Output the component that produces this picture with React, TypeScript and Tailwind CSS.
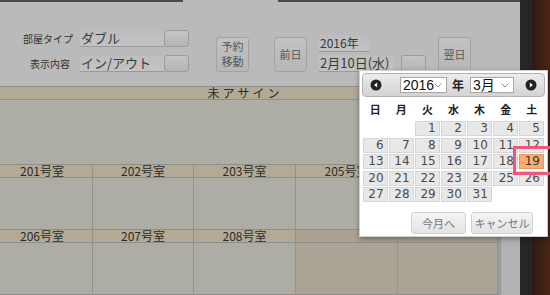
import React from 'react'

const jp = { fontFamily: '"Noto Sans CJK JP", "Noto Sans", sans-serif' }

const weekdays = ['日', '月', '火', '水', '木', '金', '土']

// March 2016 starts on Tuesday
const days: (number | null)[] = [null, null, ...Array.from({ length: 31 }, (_, i) => i + 1)]

function SmallBtn() {
  return <div className="w-[25px] h-[17px] rounded-[3px] border border-[#9c9c9c] bg-gradient-to-b from-[#c4c4c4] to-[#b4b4b4]" />
}

function BigBtn({ children }: { children: React.ReactNode }) {
  return (
    <div className="w-[33px] h-[35px] rounded-[3px] border border-[#a2a2a2] bg-gradient-to-b from-[#c2c2c2] to-[#b6b6b6] flex flex-col items-center justify-center text-[11px] text-[#555]">
      {children}
    </div>
  )
}

function Field({ text, w, size = 'text-[13px]' }: { text: string; w: string; size?: string }) {
  return (
    <div className={`${w} h-[17px] border-b border-[#9a9a9a] bg-gradient-to-b from-[#bdbdbd] to-[#c3c3c3] ${size} leading-[16px] text-[#3a3a3a] px-[1px] whitespace-nowrap`}>
      {text}
    </div>
  )
}

function CircleArrow({ dir }: { dir: 'l' | 'r' }) {
  return (
    <svg width="12" height="12" viewBox="0 0 12 12">
      <circle cx="6" cy="6" r="5.5" fill="#222" />
      {dir === 'l' ? <path d="M7.2 3.4 L4 6 L7.2 8.6 Z" fill="#fff" /> : <path d="M4.8 3.4 L8 6 L4.8 8.6 Z" fill="#fff" />}
    </svg>
  )
}

function SelectBox({ text, w }: { text: string; w: string }) {
  return (
    <div className={`${w} h-[16px] bg-white border border-[#a8a8a8] flex items-center justify-between pl-[2px] pr-[4px]`}>
      <span className="text-[14px] leading-[14px] text-[#111]" style={{ fontFamily: '"Liberation Sans", "Noto Sans CJK JP", sans-serif' }}>
        {text}
      </span>
      <svg width="8" height="5" viewBox="0 0 8 5"><path d="M0.5 0.5 L4 4 L7.5 0.5" stroke="#888" strokeWidth="1" fill="none" /></svg>
    </div>
  )
}

const cols = ['w-[101px]', 'w-[101px]', 'w-[102px]', 'w-[102px]', 'w-[100px]']

function RoomHeader({ names }: { names: string[] }) {
  return (
    <div className="flex h-[13px] border-b border-[#8e8e8a]">
      {cols.map((c, i) => (
        <div
          key={i}
          className={`${c} border-r border-[#939390] text-center text-[12px] leading-[12px] text-[#2a2a2a] ${names[i] ? 'bg-[#b3aa96]' : 'bg-[#aaa292]'}`}
        >
          {names[i]}
        </div>
      ))}
    </div>
  )
}

function RoomCells({ h, filled }: { h: string; filled: number }) {
  return (
    <div className={`flex ${h} border-b border-[#8e8e8a]`}>
      {cols.map((c, i) => (
        <div key={i} className={`${c} border-r border-[#939390] ${i < filled ? 'bg-[#aeada5]' : 'bg-[#aba496]'}`} />
      ))}
    </div>
  )
}

export default function App() {
  return (
    <div className="relative w-[550px] h-[295px] overflow-hidden flex bg-[#3b2016]" style={jp}>
      {/* main panel */}
      <div className="w-[520px] h-full bg-[#bababa] flex flex-col">
        <div className="flex h-[2px]">
          <div className="w-[183px] bg-[#4a4a4a]" />
          <div className="w-[95px]" />
          <div className="w-[242px] bg-[#4a4a4a]" />
        </div>

        {/* form */}
        <div className="h-[85px] flex items-start pt-[27px]">
          <div className="flex flex-col gap-[8px] pt-[1px]">
            <div className="flex items-center">
              <span className="w-[80px] pr-[7px] text-right text-[10px] text-[#333]">部屋タイプ</span>
              <Field text="ダブル" w="w-[84px]" />
              <SmallBtn />
            </div>
            <div className="flex items-center">
              <span className="w-[80px] pr-[10px] text-right text-[10px] text-[#333]">表示内容</span>
              <Field text="イン/アウト" w="w-[84px]" />
              <SmallBtn />
            </div>
          </div>
          <div className="ml-[27px] mt-[8px]">
            <BigBtn>
              <span className="block leading-[15px]">予約</span>
              <span className="block leading-[15px]">移動</span>
            </BigBtn>
          </div>
          <div className="ml-[25px] mt-[8px]">
            <BigBtn>前日</BigBtn>
          </div>
          <div className="ml-[12px] mt-[6px] flex flex-col gap-[3px]">
            <Field text="2016年" w="w-[50px]" size="text-[12px]" />
            <div className="flex items-end gap-[8px]">
              <Field text="2月10日(水)" w="w-[74px]" />
              <SmallBtn />
            </div>
          </div>
          <div className="ml-[12px] mt-[8px]">
            <BigBtn>翌日</BigBtn>
          </div>
        </div>

        {/* table */}
        <div className="flex flex-1">
          <div className="w-[506px] -ml-[8px] flex flex-col">
            <div className="h-[14px] bg-[#b3aa96] border-y border-[#8e8e8a] text-center text-[12px] leading-[12px] text-[#2a2a2a] tracking-[3px]">
              未アサイン
            </div>
            <div className="h-[65px] bg-[#aeada5] border-b border-[#8e8e8a]" />
            <RoomHeader names={['201号室', '202号室', '203号室', '205号室', '']} />
            <RoomCells h="h-[52px]" filled={5} />
            <RoomHeader names={['206号室', '207号室', '208号室', '', '']} />
            <RoomCells h="h-[52px]" filled={3} />
          </div>
          <div className="w-[22px] bg-[#b2b2b2] border-l-[3px] border-[#9a9a9a]" />
        </div>
      </div>
      <div className="w-[12px] h-full bg-[#262626]" />
      <div className="flex-1 h-full bg-gradient-to-r from-[#2e1a12] to-[#4a2516]" />

      {/* datepicker popup */}
      <div className="absolute left-[359px] top-[70px] w-[189px] h-[167px] bg-white border border-[#cfcfcf] shadow-[0_2px_5px_rgba(0,0,0,0.35)] p-[2px]">
        <div className="h-[24px] rounded-[4px] border border-[#b4b4b4] bg-gradient-to-b from-[#ececec] to-[#d3d3d3] flex items-center px-[7px]">
          <CircleArrow dir="l" />
          <div className="ml-[18px]">
            <SelectBox text="2016" w="w-[47px]" />
          </div>
          <span className="ml-[5px] text-[12px] font-bold text-[#222]">年</span>
          <div className="ml-[6px]">
            <SelectBox text="3月" w="w-[44px]" />
          </div>
          <div className="ml-auto">
            <CircleArrow dir="r" />
          </div>
        </div>

        <div className="grid grid-cols-7 gap-x-[1.5px] px-[1px] h-[24px] items-center">
          {weekdays.map(d => (
            <div key={d} className="text-center text-[11px] font-bold text-[#222]">{d}</div>
          ))}
        </div>

        <div className="grid grid-cols-7 gap-x-[1.5px] gap-y-[1.5px] px-[1px]">
          {days.map((d, i) =>
            d === null ? (
              <div key={i} className="h-[15px]" />
            ) : (
              <div
                key={i}
                className={`h-[15px] border text-right pr-[3px] text-[12px] leading-[13px] ${
                  d === 19 ? 'bg-[#f9ae70] border-[#e39a5c] text-[#333]' : 'bg-[#e8e8e8] border-[#d6d6d6] text-[#4a4a4a]'
                }`}
                style={{ fontFamily: '"DejaVu Sans", sans-serif' }}
              >
                {d}
              </div>
            )
          )}
        </div>

        <div className="flex justify-end gap-[5px] mt-[10px] pr-[12px]">
          <div className="w-[55px] h-[22px] rounded-[3px] border border-[#d2d2d2] bg-gradient-to-b from-[#f4f4f4] to-[#e4e4e4] text-[11px] leading-[20px] text-center text-[#777]">
            今月へ
          </div>
          <div className="w-[62px] h-[22px] rounded-[3px] border border-[#d2d2d2] bg-gradient-to-b from-[#f4f4f4] to-[#e4e4e4] text-[11px] leading-[20px] text-center text-[#777]">
            キャンセル
          </div>
        </div>
      </div>

      {/* highlight annotation */}
      <div className="absolute left-[513px] top-[146px] w-[45px] h-[29px] border-[3px] border-[#f0577c]" />
    </div>
  )
}
